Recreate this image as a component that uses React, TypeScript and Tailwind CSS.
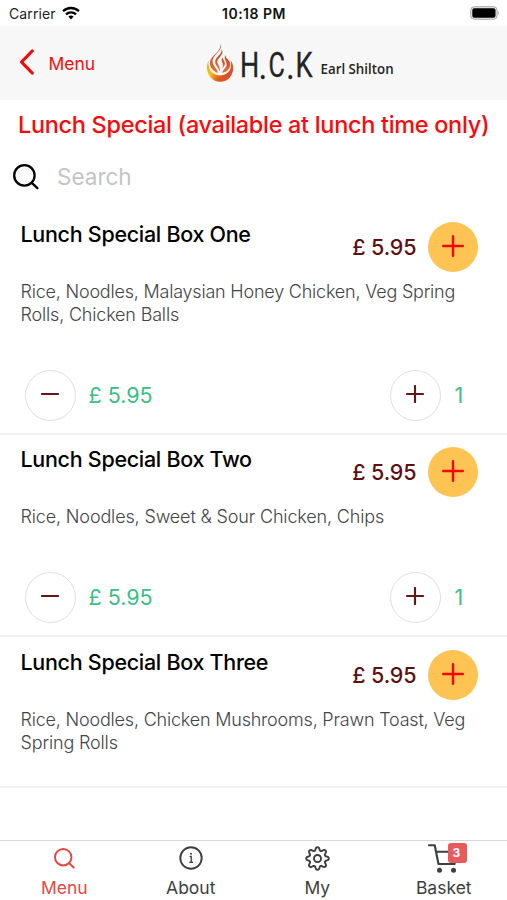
import React from "react";

type Item = { name: string; lines: string[]; qty?: number; nameClass: string; lineClasses: string[]; box: string };

const items: Item[] = [
  {
    name: "Lunch Special Box One",
    lines: ["Rice, Noodles, Malaysian Honey Chicken, Veg Spring", "Rolls, Chicken Balls"],
    qty: 1,
    nameClass: "tracking-[-0.3px]",
    lineClasses: ["tracking-[-0.21px]", "tracking-[-0.18px]"],
    box: "h-[226px] pt-[13px]",
  },
  {
    name: "Lunch Special Box Two",
    lines: ["Rice, Noodles, Sweet & Sour Chicken, Chips"],
    qty: 1,
    nameClass: "tracking-[-0.3px]",
    lineClasses: ["tracking-[-0.15px]"],
    box: "h-[202px] pt-[12px]",
  },
  {
    name: "Lunch Special Box Three",
    lines: ["Rice, Noodles, Chicken Mushrooms, Prawn Toast, Veg", "Spring Rolls"],
    nameClass: "tracking-[-0.3px]",
    lineClasses: ["tracking-[-0.2px]", "tracking-[-0.15px]"],
    box: "h-[151px] pt-[13px]",
  },
];

function Magnifier({ className, width }: { className: string; width: number }) {
  return (
    <svg viewBox="0 0 26 26" className={className} fill="none" stroke="currentColor" strokeWidth={width} strokeLinecap="round">
      <circle cx="11.4" cy="11.4" r="10.2" />
      <path d="M18.8 18.8l5.6 5.4" />
    </svg>
  );
}

function Plus({ size, minus, width }: { size: number; minus?: boolean; width: number }) {
  return (
    <svg viewBox="0 0 22 22" width={size} height={size} fill="none" stroke="currentColor" strokeWidth={width} strokeLinecap="round">
      <path d={minus ? "M1.2 11h19.6" : "M1.2 11h19.6M11 1.2v19.6"} />
    </svg>
  );
}

function StatusBar() {
  return (
    <div className="grid h-[26px] grid-cols-3 items-center pl-[8px] pr-[7px] pt-[1px]">
      <div className="flex items-center gap-[6px] pl-[1px] text-[14px] text-[#222]">
        <span className="tracking-[0.1px]">Carrier</span>
        <svg viewBox="0 0 18 14" className="mb-[2px] h-[14px] w-[18px]" fill="none" stroke="#000" strokeWidth="2.4">
          <path d="M1 5.2a11.6 11.6 0 0 1 16 0" />
          <path d="M4 8.4a7.3 7.3 0 0 1 10 0" />
          <path d="M6.4 10.6a3.8 3.8 0 0 1 5.2 0L9 13.4z" fill="#000" stroke="none" />
        </svg>
      </div>
      <div className="text-center text-[14px] font-semibold tracking-[0.5px] text-[#111]">10:18 PM</div>
      <div className="flex justify-end">
        <svg viewBox="0 0 30 14" className="mb-[2px] h-[14px] w-[30px]">
          <rect x="0.7" y="0.7" width="26.4" height="12.6" rx="3.6" fill="#e6e6e6" stroke="#aaa" />
          <rect x="2.3" y="2.3" width="23.2" height="9.4" rx="2" fill="#000" />
          <path d="M28.2 4.8q1.8 2.2 0 4.4z" fill="#999" />
        </svg>
      </div>
    </div>
  );
}

function Flame() {
  return (
    <svg viewBox="0 0 28 40" className="h-[40px] w-[28px]">
      <defs>
        <linearGradient id="ring" x1="0" y1="0" x2="1" y2="0.5">
          <stop offset="0" stopColor="#f3a51c" />
          <stop offset="0.35" stopColor="#f5c21c" />
          <stop offset="0.7" stopColor="#de5a20" />
          <stop offset="1" stopColor="#d8502a" />
        </linearGradient>
        <linearGradient id="fire" x1="0" y1="0" x2="0" y2="1">
          <stop offset="0" stopColor="#c23c24" />
          <stop offset="1" stopColor="#e9703a" />
        </linearGradient>
      </defs>
      <path d="M2.6 17.5C-2 27 3.8 38.8 14.3 38.8C25 38.8 30.8 26 24.8 17.5C26.6 26.5 21.6 32.4 14.8 32.4C7 32.4 1.6 27 2.6 17.5z" fill="url(#ring)" />
      <path d="M14.8 1C16 5.5 12.5 8.5 9.5 12C6 16 5.5 19.5 8.5 23.5C10 25.5 11.5 27 11.8 30C6.5 28 3 23.5 4.2 18C5.4 12.5 14.5 9.5 14.8 1z" fill="url(#fire)" />
      <path d="M15.6 6C18.5 11 13 14 11.5 17.5C10.3 20.6 14.5 23.5 14.2 29C13 24.8 8.4 22.2 9.3 17.6C10.2 13.5 16.3 11.5 15.6 6z" fill="url(#fire)" />
      <path d="M19.5 12C17 16 21.5 18.5 20.5 22.5C19.7 25.5 16.8 26.5 16.3 30C22 28.5 25.4 24.5 24 19.5C23.2 16.8 19.3 15.5 19.5 12z" fill="url(#fire)" />
      <path d="M16.8 14.5C13.3 18 19 20 16.2 25.5C18.7 23.3 19.5 21 18.5 18.8C17.8 17.4 16.6 16.5 16.8 14.5z" fill="url(#fire)" />
    </svg>
  );
}

function Header() {
  return (
    <header className="flex h-[74px] items-center bg-[#f7f7f7] pl-[19px]">
      <button className="flex w-[187px] items-center gap-[13.5px] text-[17.5px] text-[#f80c10]">
        <svg viewBox="0 0 16 26" className="mb-[3px] h-[26px] w-[16px]" fill="none" stroke="#fa0505" strokeWidth="3.2" strokeLinecap="round" strokeLinejoin="round">
          <path d="M13.2 2L2.5 13l10.7 11" />
        </svg>
        <span className="pt-[2px]">Menu</span>
      </button>
      <Flame />
      <svg viewBox="0 0 200 64" className="h-[64px] w-[200px] overflow-visible" fill="#242424">
        <g fontFamily="Roboto" fontSize="35" stroke="#242424" strokeWidth="0.3">
          <text transform="translate(6 45.5) scale(.77 1)">H</text>
          <text transform="translate(25.5 47.5) scale(.85 1)" fontWeight="700" fontSize="27">.</text>
          <text transform="translate(34.5 45.5) scale(.72 1)">C</text>
          <text transform="translate(53 47.5) scale(.85 1)" fontWeight="700" fontSize="27">.</text>
          <text transform="translate(61.5 45.5) scale(.78 1)">K</text>
        </g>
        <text transform="translate(86.5 43) scale(.86 1)" fontFamily="Open Sans" fontSize="15" fontWeight="600" textLength="85" lengthAdjust="spacingAndGlyphs">Earl Shilton</text>
      </svg>
    </header>
  );
}

function MenuItem({ item }: { item: Item }) {
  return (
    <article className={`border-b-[2px] border-[#f0f1f1] ${item.box}`}>
      <div className="flex h-[50px] pl-[20.5px] pr-[29.5px]">
        <h2 className={`flex-1 whitespace-nowrap text-[21.5px] font-medium leading-[24px] text-black ${item.nameClass}`}>{item.name}</h2>
        <div className="flex items-center gap-[11px]">
          <span className="whitespace-nowrap text-[21.5px] font-medium leading-[26px] tracking-[-0.1px] text-[#5c1010]">£ 5.95</span>
          <button className="flex size-[50px] items-center justify-center rounded-full bg-[#fdc453] pb-[2px] text-[#fa0505]">
            <Plus size={22} width={2.4} />
          </button>
        </div>
      </div>
      <div className="mt-[8px] pl-[20.5px] text-[18px] font-light leading-[23px] text-[#444]">
        {item.lines.map((line, i) => (
          <p key={line} className="whitespace-nowrap"><span className={item.lineClasses[i]}>{line}</span></p>
        ))}
      </div>
      {item.qty && (
        <div className="mt-[44px] flex h-[50px] items-center pl-[25px] pr-[42.5px] text-[21.5px] text-[#3bbf83]">
          <button className="flex size-[51px] items-center justify-center rounded-full border border-[#dedfe0] pb-[2px] pr-[1px] text-[#681515]">
            <Plus size={18} width={2.6} minus />
          </button>
          <span className="ml-[12.5px] flex-1">£ 5.95</span>
          <button className="mr-[13.5px] flex size-[51px] items-center justify-center rounded-full border border-[#dedfe0] pb-[2px] pr-[1px] text-[#681515]">
            <Plus size={18} width={2.6} />
          </button>
          <span className="w-[10px]">{item.qty}</span>
        </div>
      )}
    </article>
  );
}

function Gear() {
  const points: string[] = [];
  for (let i = 0; i <= 96; i++) {
    const a = (i / 96) * Math.PI * 2;
    const wave = Math.cos(a * 8);
    const r = 9.7 + 1.6 * Math.sign(wave) * Math.pow(Math.abs(wave), 0.6);
    points.push(`${12.5 + r * Math.sin(a)},${12.5 - r * Math.cos(a)}`);
  }
  return (
    <svg viewBox="0 0 25 25" className="size-[25px]" fill="none" stroke="currentColor" strokeWidth="1.9" strokeLinejoin="round">
      <polygon points={points.join(" ")} />
      <circle cx="12.5" cy="12.5" r="3.5" />
    </svg>
  );
}

function Tab({ label, active, children }: { label: string; active?: boolean; children: React.ReactNode }) {
  return (
    <button className={`flex flex-col items-center ${active ? "text-[#e8463e]" : "text-[#3e3e3e]"}`}>
      <span className="flex h-[34px] items-center justify-center">{children}</span>
      <span className="text-[17.5px] leading-[26px]">{label}</span>
    </button>
  );
}

export default function App() {
  return (
    <div className="flex h-[900px] w-[507px] flex-col overflow-hidden bg-white font-['Inter',sans-serif]">
      <StatusBar />
      <Header />
      <h1 className="flex h-[50px] items-center whitespace-nowrap pl-[18px] text-[23.5px] font-medium tracking-[-0.32px] text-[#fa0a0c]">
        Lunch Special (available at lunch time only)
      </h1>
      <div className="flex h-[59px] items-center gap-[18px] pb-[5px] pl-[13px] text-[22.5px] text-[#c4c4c4]">
        <Magnifier className="size-[26px] text-black" width={2.3} />
        <span>Search</span>
      </div>
      <main className="flex-1">
        {items.map((item) => <MenuItem key={item.name} item={item} />)}
      </main>
      <nav className="grid h-[60px] grid-cols-4 border-t border-[#d9d9d9] pl-[1px]">
        <Tab label="Menu" active><Magnifier className="size-[21px]" width={2.4} /></Tab>
        <Tab label="About">
          <svg viewBox="0 0 24 24" className="size-[24px]" fill="none" stroke="currentColor" strokeWidth="1.9">
            <circle cx="12" cy="12" r="10.7" />
            <path d="M10.6 10.5h1.6v5.7M10.3 16.4h3.8" strokeWidth="1.3" />
            <circle cx="12" cy="7.7" r="1" fill="currentColor" stroke="none" />
          </svg>
        </Tab>
        <Tab label="My"><Gear /></Tab>
        <Tab label="Basket">
          <span className="relative block h-[31px] w-[31px]">
            <svg viewBox="0 0 31 31" className="size-[31px]" fill="none" stroke="currentColor" strokeWidth="2.1" strokeLinecap="round" strokeLinejoin="round">
              <path d="M1 2.2h5.7l3.8 18.8h16l2.5-12.2H8.2" />
              <circle cx="11.5" cy="27.3" r="2.5" fill="currentColor" stroke="none" />
              <circle cx="25.5" cy="27.3" r="2.5" fill="currentColor" stroke="none" />
            </svg>
            <span className="absolute left-[20px] top-[0px] flex h-[20px] w-[19px] items-center justify-center rounded-[3px] bg-[#e65c5c] pr-[3px] text-[12px] font-bold text-white">3</span>
          </span>
        </Tab>
      </nav>
    </div>
  );
}
